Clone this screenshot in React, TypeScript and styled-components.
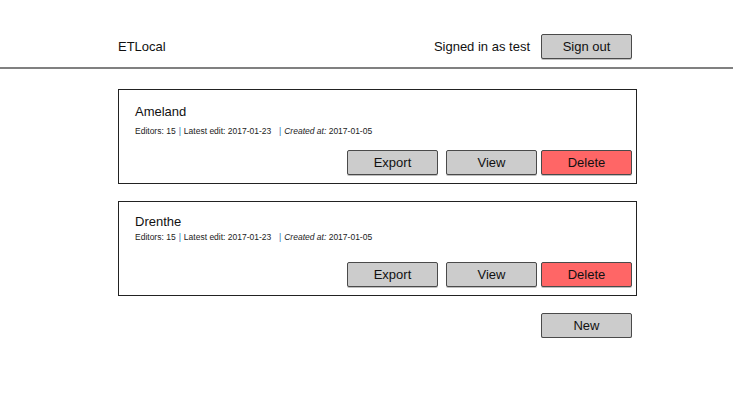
import React from "react";
import styled, { createGlobalStyle } from "styled-components";

const Global = createGlobalStyle`
  html, body { margin: 0; padding: 0; background: #ffffff; }
  body { font-family: "Liberation Sans", Arial, sans-serif; color: #111; }
`;

const Header = styled.header`
  border-bottom: 2px solid #808080;
  padding: 34px 0 8px 0;
`;

const HeaderInner = styled.div`
  display: flex;
  align-items: center;
  justify-content: space-between;
  width: 514px;
  margin-left: 118px;
`;

const Brand = styled.div`
  font-size: 13px;
`;

const UserArea = styled.div`
  display: flex;
  align-items: center;
  gap: 11px;
`;

const UserText = styled.span`
  font-size: 13px;
`;

const Button = styled.button<{ $danger?: boolean }>`
  width: 91px;
  height: 25px;
  padding: 0;
  border: 1px solid #4a4a4a;
  border-radius: 2px;
  background: ${(p) => (p.$danger ? "#ff6666" : "#cccccc")};
  font-family: "Liberation Sans", Arial, sans-serif;
  font-size: 13px;
  color: #111;
  box-shadow: 0 1px 0 rgba(0, 0, 0, 0.25);
`;

const Main = styled.main`
  display: flex;
  flex-direction: column;
  gap: 17px;
  width: 519px;
  margin: 20px 0 0 118px;
`;

const Card = styled.section<{ $tight?: boolean }>`
  box-sizing: border-box;
  height: 95px;
  border: 1px solid #222;
  padding: ${(p) => (p.$tight ? "11px" : "13px")} 4px 8px 16px;
  display: flex;
  flex-direction: column;
`;

const Title = styled.h2<{ $tight?: boolean }>`
  margin: 0;
  font-size: 13px;
  font-weight: normal;
  line-height: 18px;
  margin-bottom: ${(p) => (p.$tight ? "0px" : "4px")};
`;

const Meta = styled.div`
  font-size: 8.5px;
  line-height: 12px;
  color: #222;
`;

const Sep = styled.span`
  color: #2a6db0;
  margin: 0 3px;
`;

const Italic = styled.span`
  font-style: italic;
`;

const ButtonRow = styled.div`
  margin-top: auto;
  display: flex;
  justify-content: flex-end;
  gap: 4px;
  & > button:first-child {
    margin-right: 4px;
  }
`;

const Footer = styled.div`
  display: flex;
  justify-content: flex-end;
  padding-right: 5px;
`;

const sets = [
  { name: "Ameland", tight: false },
  { name: "Drenthe", tight: true },
];

export default function App() {
  return (
    <>
      <Global />
      <Header>
        <HeaderInner>
          <Brand>ETLocal</Brand>
          <UserArea>
            <UserText>Signed in as test</UserText>
            <Button>Sign out</Button>
          </UserArea>
        </HeaderInner>
      </Header>
      <Main>
        {sets.map((s) => (
          <Card key={s.name} $tight={s.tight}>
            <Title $tight={s.tight}>{s.name}</Title>
            <Meta>
              Editors: 15<Sep>|</Sep>Latest edit: 2017-01-23 <Sep>&nbsp;|</Sep>
              <Italic>Created at:</Italic> 2017-01-05
            </Meta>
            <ButtonRow>
              <Button>Export</Button>
              <Button>View</Button>
              <Button $danger>Delete</Button>
            </ButtonRow>
          </Card>
        ))}
        <Footer>
          <Button>New</Button>
        </Footer>
      </Main>
    </>
  );
}
